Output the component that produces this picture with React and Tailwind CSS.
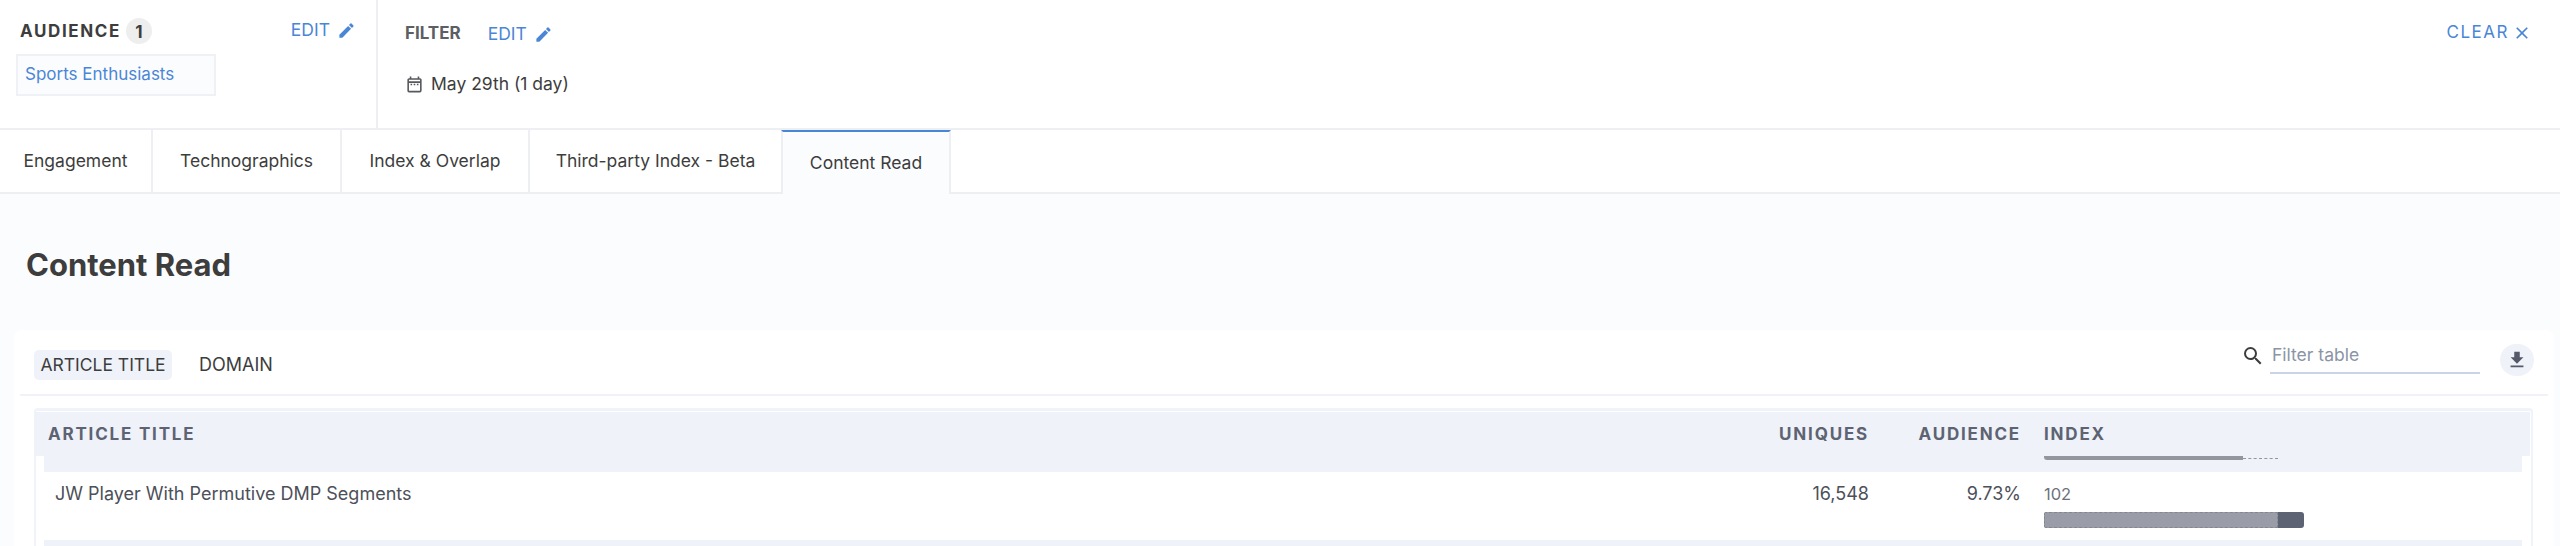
import { MdEdit, MdOutlineDateRange, MdSearch, MdFileDownload, MdClose } from 'react-icons/md'

const TABS = [
  { label: 'Engagement', width: 'w-[153px]' },
  { label: 'Technographics', width: 'w-[189px]' },
  { label: 'Index & Overlap', width: 'w-[188px]' },
  { label: 'Third-party Index - Beta', width: 'w-[253px]' },
]

function EditLink({ className = '' }) {
  return (
    <span className={`flex items-center text-[17.5px] leading-5 text-[#4a86d6] ${className}`}>
      EDIT
      <MdEdit className="ml-[7px] text-[19px]" />
    </span>
  )
}

export default function App() {
  return (
    <div className="h-[546px] w-[2560px] overflow-hidden bg-white font-['Inter',sans-serif] text-[17.5px] text-[#3d3d3d]">
      {/* top filter bar */}
      <div className="flex h-[130px] border-b-2 border-[#eeeff3]">
        <div className="w-[378px] shrink-0 border-r-2 border-[#eeeff3] pl-[16px] pr-[20px] pt-[18px]">
          <div className="flex h-[26px] items-start justify-between">
            <div className="flex items-center">
              <span className="ml-[4px] text-[17px] font-bold leading-[26px] tracking-[1.6px]">AUDIENCE</span>
              <span className="ml-[5px] flex h-[26px] w-[26px] items-center justify-center rounded-full bg-[#eeeeee] pt-[3px] text-[17px] font-bold">1</span>
            </div>
            <EditLink className="mt-[2px]" />
          </div>
          <div className="mt-[10px] flex h-[42px] w-[200px] items-center border-2 border-[#eff1f6] bg-[#fbfcfe] pl-[7px] text-[17px] text-[#4a86d6]">
            Sports Enthusiasts
          </div>
        </div>
        <div className="flex-1 pl-[27px] pt-[24px]">
          <div className="flex h-5 items-center">
            <span className="text-[17px] font-bold text-[#5c5f63]">FILTER</span>
            <EditLink className="ml-[27px]" />
          </div>
          <div className="mt-[30px] flex items-center leading-5">
            <MdOutlineDateRange className="text-[19px] text-[#55585c]" />
            <span className="ml-[7px]">May 29th (1 day)</span>
          </div>
        </div>
        <div className="flex items-start pr-[28px] pt-[23px] text-[#4a86d6]">
          <span className="flex h-5 items-center text-[17px] tracking-[1.5px]">
            CLEAR
            <MdClose className="ml-[3px] text-[20px]" />
          </span>
        </div>
      </div>

      {/* tabs */}
      <div className="flex h-[64px] border-b-2 border-[#eeeff3]">
        {TABS.map((t) => (
          <div key={t.label} className={`${t.width} flex items-center justify-center border-r-2 border-[#eeeff3]`}>
            {t.label}
          </div>
        ))}
        <div className="-mb-[2px] ml-[-2px] flex h-[64px] w-[170px] items-center justify-center border-x-2 border-t-2 border-[#eeeff3] border-t-[#4a86d6] bg-[#fbfcfe]">
          Content Read
        </div>
      </div>

      {/* content */}
      <div className="h-[352px] bg-[#fbfcfe] pl-[14px] pr-[6px]">
        <h1 className="pl-[12px] pt-[53px] text-[31px] font-bold leading-[36px]">Content Read</h1>
        <div className="mt-[47px] h-[300px] rounded-t-lg bg-white px-[6px]">
          <div className="flex h-[66px] items-start border-b-2 border-[#f0f2f8] px-[14px]">
            <div className="mt-[20px] flex h-[30px] w-[138px] items-center justify-center rounded-[5px] bg-[#eff2f9] text-[17.5px]">
              ARTICLE TITLE
            </div>
            <span className="ml-[27px] mt-[20px] text-[18px] leading-[30px]">DOMAIN</span>
            <div className="ml-auto mt-[14px] flex items-start">
              <MdSearch className="text-[24px] text-[#3d3d3d]" />
              <div className="ml-[5px] h-[30px] w-[210px] border-b-2 border-[#cbd3e8] pl-[2px] text-[17.5px] leading-[22px] text-[#8b94a5]">
                Filter table
              </div>
              <div className="ml-[20px] flex h-[32px] w-[34px] items-center justify-center rounded-full bg-[#eff2f9]">
                <MdFileDownload className="text-[22px] text-[#55596a]" />
              </div>
            </div>
          </div>

          <div className="ml-[14px] mr-[15px] mt-[12px] rounded-t border-x-2 border-t-[3px] border-[#f0f3f9] pt-px">
            <div className="-ml-[2px] mr-px flex h-[44px] items-center bg-[#eff2f9] pt-px text-[17px] font-bold tracking-[1.8px] text-[#5d6372]">
              <span className="ml-[14px] flex-1">ARTICLE TITLE</span>
              <span className="w-[100px] text-right">UNIQUES</span>
              <span className="w-[152px] text-right">AUDIENCE</span>
              <span className="ml-[23px] w-[486px]">INDEX</span>
            </div>
            <div className="ml-[8px] mr-[9px] h-[16px] bg-[#eff2f9] pl-[2000px]">
              <div className="flex w-[234px]">
                <div className="h-[4px] w-[199px] rounded-bl-[3px] bg-[#94969f]" />
                <div className="h-[3px] w-[35px] border-b border-dashed border-[#94969f]" />
              </div>
            </div>
            <div className="ml-[8px] mr-[9px] flex h-[68px] text-[18px] text-[#4d4f59]">
              <span className="ml-[11px] mt-[12px] flex-1 leading-5">JW Player With Permutive DMP Segments</span>
              <span className="mt-[12px] w-[100px] text-right leading-5">16,548</span>
              <span className="mt-[12px] w-[152px] text-right leading-5">9.73%</span>
              <div className="ml-[23px] mt-[12px] w-[478px]">
                <div className="text-[16.5px] leading-5 text-[#6e717c]">102</div>
                <div className="mt-[8px] flex h-4 w-[260px] overflow-hidden rounded-[3px] bg-[#5d6372]">
                  <div className="h-4 w-[234px] border border-dashed border-[#85878f] bg-[#9a9ca8]" />
                </div>
              </div>
            </div>
            <div className="ml-[8px] mr-[9px] h-[20px] bg-[#eff2f9]" />
          </div>
        </div>
      </div>
    </div>
  )
}
